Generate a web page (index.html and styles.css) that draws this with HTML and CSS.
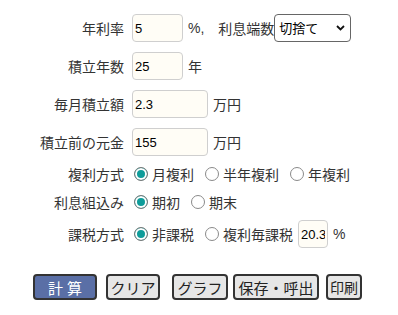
FILE: index.html
```html
<!DOCTYPE html>
<html lang="ja">
<head>
    <meta charset="UTF-8">
    <meta name="viewport" content="width=device-width, initial-scale=1.0">
    <title>積立計算</title>
    <link rel="stylesheet" href="styles.css">
</head>
<body>
    <div class="form">
        <div class="row">
            <div class="label">年利率</div>
            <div class="field">
                <input class="num w51" type="text" value="5">
                <span class="unit">%,</span>
                <span class="sub-label">利息端数</span>
                <span class="select-wrap">
                    <select class="select">
                        <option>切捨て</option>
                        <option>四捨五入</option>
                        <option>切上げ</option>
                    </select>
                    <svg class="chevron" width="9" height="6" viewBox="0 0 9 6"><polyline points="1,1 4.5,4.5 8,1" fill="none" stroke="#111" stroke-width="1.8"/></svg>
                </span>
            </div>
        </div>

        <div class="row">
            <div class="label">積立年数</div>
            <div class="field">
                <input class="num w51" type="text" value="25">
                <span class="unit">年</span>
            </div>
        </div>

        <div class="row">
            <div class="label">毎月積立額</div>
            <div class="field">
                <input class="num w76" type="text" value="2.3">
                <span class="unit">万円</span>
            </div>
        </div>

        <div class="row row-last-input">
            <div class="label">積立前の元金</div>
            <div class="field">
                <input class="num w76" type="text" value="155">
                <span class="unit">万円</span>
            </div>
        </div>

        <div class="row row-radio">
            <div class="label">複利方式</div>
            <div class="field">
                <label class="opt"><input type="radio" name="compound" checked>月複利</label>
                <label class="opt"><input type="radio" name="compound">半年複利</label>
                <label class="opt"><input type="radio" name="compound">年複利</label>
            </div>
        </div>

        <div class="row row-radio">
            <div class="label">利息組込み</div>
            <div class="field">
                <label class="opt"><input type="radio" name="timing" checked>期初</label>
                <label class="opt"><input type="radio" name="timing">期末</label>
            </div>
        </div>

        <div class="row">
            <div class="label">課税方式</div>
            <div class="field">
                <label class="opt"><input type="radio" name="tax" checked>非課税</label>
                <label class="opt tight"><input type="radio" name="tax">複利毎課税</label>
                <input class="num w30" type="text" value="20.3">
                <span class="unit">%</span>
            </div>
        </div>
    </div>

    <div class="buttons">
        <button class="btn btn-calc">計 算</button>
        <button class="btn btn-clear">クリア</button>
        <button class="btn btn-graph">グラフ</button>
        <button class="btn btn-save">保存・呼出</button>
        <button class="btn btn-print">印刷</button>
    </div>
</body>
</html>
```

FILE: styles.css
```css
body {
    font-family: "Liberation Sans", "Noto Sans CJK JP", sans-serif;
    font-size: 14px;
    color: #333;
    margin: 0;
    background: #fff;
}
.form {
    padding-top: 14px;
}
.row {
    display: grid;
    grid-template-columns: 124px auto;
    column-gap: 8px;
    align-items: center;
    height: 28px;
    margin-bottom: 10px;
}
.row-last-input {
    margin-bottom: 8px;
}
.row-radio {
    height: 20px;
    margin-bottom: 8px;
}
.label {
    text-align: right;
    white-space: nowrap;
}
.field {
    display: flex;
    align-items: center;
    white-space: nowrap;
}
.num {
    box-sizing: border-box;
    height: 28px;
    padding: 0 2px;
    border: 1px solid #cfcfcf;
    border-radius: 4px;
    background: #fffdf6;
    font-family: "Liberation Sans", sans-serif;
    font-size: 13px;
    color: #000;
    outline: none;
}
.w51 { width: 51px; }
.w76 { width: 76px; }
.w30 { width: 30px; }
.unit {
    margin-left: 5px;
}
.sub-label {
    margin-left: 14px;
}
.select-wrap {
    position: relative;
    display: inline-block;
}
.select {
    appearance: none;
    -webkit-appearance: none;
    box-sizing: border-box;
    width: 77px;
    height: 28px;
    padding: 0 4px;
    border: 1px solid #666;
    border-radius: 4px;
    background: #fff;
    font-family: "Liberation Sans", "Noto Sans CJK JP", sans-serif;
    font-size: 13px;
    color: #000;
}
.chevron {
    position: absolute;
    right: 6px;
    top: 11px;
    pointer-events: none;
}
.opt {
    display: inline-flex;
    align-items: center;
    margin-right: 9px;
}
.opt.tight {
    margin-right: 5px;
}
.opt input {
    appearance: none;
    -webkit-appearance: none;
    box-sizing: border-box;
    width: 14px;
    height: 14px;
    margin: 0 4px 0 2px;
    border: 1px solid #8a8a8a;
    border-radius: 50%;
    background: #fff;
}
.opt input:checked {
    background: #0e9c9a;
    box-shadow: inset 0 0 0 2px #fff;
    border-color: #7a7a7a;
}
.buttons {
    display: flex;
    margin-top: 26px;
    padding-left: 33px;
}
.btn {
    box-sizing: border-box;
    height: 26px;
    padding: 0;
    border: 2px solid #333;
    border-radius: 4px;
    background: #e6e6e6;
    font-family: "Liberation Sans", "Noto Sans CJK JP", sans-serif;
    font-size: 15px;
    color: #222;
    white-space: nowrap;
}
.btn-calc {
    width: 64px;
    background: #5a6fa6;
    color: #fff;
}
.btn-clear {
    width: 54px;
    margin-left: 9px;
}
.btn-graph {
    width: 56px;
    margin-left: 12px;
}
.btn-save {
    width: 86px;
    margin-left: 5px;
}
.btn-print {
    width: 36px;
    margin-left: 7px;
    font-size: 14px;
}
```
